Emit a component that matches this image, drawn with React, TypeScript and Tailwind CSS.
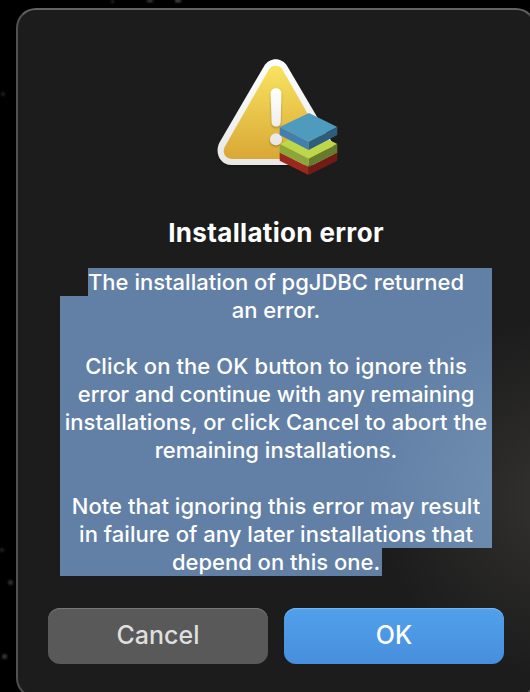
import React from 'react';

const messageLines = [
  { text: 'The installation of pgJDBC returned', className: 'ml-7 pr-7' },
  { text: 'an error.', className: '' },
  { text: '', className: '' },
  { text: 'Click on the OK button to ignore this', className: 'tracking-[0.09px]' },
  { text: 'error and continue with any remaining', className: 'tracking-[-0.06px]' },
  { text: 'installations, or click Cancel to abort the', className: 'tracking-[0.04px]' },
  { text: 'remaining installations.', className: '' },
  { text: '', className: '' },
  { text: 'Note that ignoring this error may result', className: 'tracking-[0.05px]' },
  { text: 'in failure of any later installations that', className: 'tracking-[0.03px]' },
  { text: 'depend on this one.', className: 'mr-[110px] pl-[110px]' },
];

const stars = [
  'left-[1px] top-[92px] size-[4px] bg-[#202020]',
  'left-[111px] top-0 size-[3px] bg-[#303030]',
  'left-[147px] top-0 h-[2px] w-[6px] bg-[#505050]',
  'left-[175px] top-0 h-[2px] w-[6px] bg-[#606060]',
  'left-0 top-[548px] size-[4px] bg-[#252525]',
  'left-[8px] top-[580px] size-[5px] bg-[#303030]',
  'left-[2px] top-[654px] size-[5px] bg-[#383838]',
];

const WarningIcon = () => (
  <svg className="h-[140px] w-[142px]" viewBox="0 0 426 420" fill="none">
    <defs>
      <linearGradient id="rim" x1="0" y1="42" x2="0" y2="360" gradientUnits="userSpaceOnUse">
        <stop stopColor="#ffffff" />
        <stop offset="1" stopColor="#e7e7e7" />
      </linearGradient>
      <linearGradient id="sign" x1="0" y1="62" x2="0" y2="342" gradientUnits="userSpaceOnUse">
        <stop stopColor="#f8e45f" />
        <stop offset="1" stopColor="#d9a736" />
      </linearGradient>
      <linearGradient id="mark" x1="0" y1="130" x2="0" y2="300" gradientUnits="userSpaceOnUse">
        <stop stopColor="#ffffff" />
        <stop offset="1" stopColor="#e6e6e6" />
      </linearGradient>
      <filter id="shadow" x="-20%" y="-20%" width="140%" height="140%">
        <feDropShadow dx="0" dy="4" stdDeviation="3" floodColor="#000" floodOpacity="0.3" />
      </filter>
    </defs>
    <path
      d="M178 62C194 36 230 36 246 62L380 290C397 322 380 360 346 360H80C44 360 28 322 44 292Z"
      fill="url(#rim)"
      filter="url(#shadow)"
    />
    <path
      d="M193 71C201 59 223 59 231 71L364 304C372 322 364 342 344 342H82C60 342 50 322 60 304Z"
      fill="url(#sign)"
    />
    <g fill="url(#mark)" filter="url(#shadow)">
      <path d="M197 145C197 125 229 125 229 145L227 232C227 249 200 249 200 232Z" />
      <circle cx="213" cy="283" r="18" />
    </g>
    <path d="M224 322L311 366V390L224 347Z" fill="#9b281c" />
    <path d="M397 322L311 366V390L397 347Z" fill="#711b15" />
    <path d="M224 297L311 254L397 297L311 341Z" fill="#bdd64a" />
    <path d="M224 297L311 341V366L224 323Z" fill="#8da63c" />
    <path d="M397 297L311 341V366L397 323Z" fill="#667b2d" />
    <path d="M224 246L312 204L397 246L311 290Z" fill="#4e9bbd" />
    <path d="M224 246L311 290V315L224 270Z" fill="#427fac" />
    <path d="M397 246L311 290V315L397 270Z" fill="#2d5c7e" />
  </svg>
);

const App = () => {
  return (
    <div className="relative h-[692px] w-[530px] overflow-hidden bg-black pl-4 pt-2 font-['Inter',sans-serif] text-white">
      {stars.map((star) => (
        <span key={star} className={`absolute rounded-full blur-[1px] ${star}`} />
      ))}

      <div className="relative flex h-[690px] w-[520px] flex-col items-center rounded-[20px] border-2 border-[#515151] border-t-[#626262] bg-[#1c1c1c] bg-[radial-gradient(circle_at_540px_490px,#333231_0,#2a2928_70px,#1c1c1c_180px)] bg-origin-border pt-[35px]">
        <WarningIcon />

        <h1 className="mt-[30px] h-9 whitespace-nowrap text-[26px] font-bold leading-9 tracking-[0.34px]">
          Installation error
        </h1>

        <div className="mt-[17px] w-[432px] text-center text-[22px] font-medium leading-7">
          {messageLines.map((line, index) => (
            <p
              key={index}
              className={`h-7 whitespace-nowrap bg-[#6280a5] bg-[radial-gradient(circle_at_550px_490px,#7390b5_0,#6e8bb0_60px,#6280a5_180px)] bg-fixed ${line.className}`}
            >
              {line.text}
            </p>
          ))}
        </div>

        <div className="mt-8 flex gap-4 text-[25px]">
          <button className="h-14 w-[220px] rounded-xl bg-[#595959] pb-px font-medium text-[#dfdfdf] shadow-[inset_0_1px_0_#777]">
            Cancel
          </button>
          <button className="h-14 w-[220px] rounded-xl bg-linear-to-b from-[#51a0eb] to-[#478fdc] pb-px font-medium shadow-[inset_0_1px_0_#75b5f0]">
            OK
          </button>
        </div>
      </div>
    </div>
  );
};

export default App;
